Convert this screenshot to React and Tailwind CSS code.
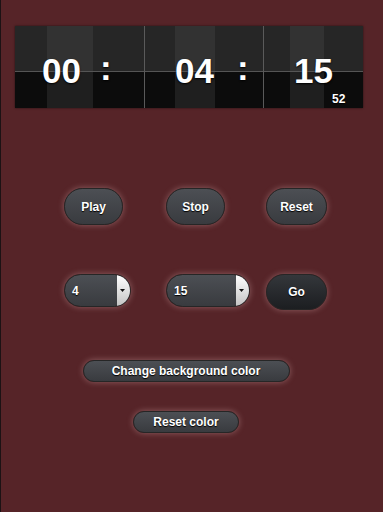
import React from "react";

const font = { fontFamily: '"Liberation Sans", Arial, sans-serif' };

// one block of the clock face: three stripes, top half lighter than bottom
const ClockBlock = ({ stripes, children, last }) => (
  <div
    className={`relative flex flex-col ${last ? "" : "border-r border-[#5a5a5a]"}`}
  >
    <div className="flex h-[45px]">
      {stripes.map((w, i) => (
        <div
          key={`t_${i}`}
          style={{ width: w }}
          className={i === 1 ? "bg-[#323232]" : "bg-[#262626]"}
        />
      ))}
    </div>
    <div className="h-px bg-[#555555]" />
    <div className="flex h-[36px]">
      {stripes.map((w, i) => (
        <div
          key={`b_${i}`}
          style={{ width: w }}
          className={i === 1 ? "bg-[#1f1f1f]" : "bg-[#0c0c0c]"}
        />
      ))}
    </div>
    {children}
  </div>
);

const digitCls =
  "absolute text-[35px] font-bold leading-none text-white [text-shadow:0_1px_2px_#000]";

const PillButton = ({ label, className = "", dark }) => (
  <button
    className={`flex items-center justify-center rounded-full border border-[#262626] text-[12px] font-bold text-white [text-shadow:0_1px_1px_#000] shadow-[0_0_6px_rgba(255,210,210,0.35)] ${
      dark
        ? "bg-linear-to-b from-[#34373b] to-[#1c1e21]"
        : "bg-linear-to-b from-[#4c4f54] to-[#393b3f]"
    } ${className}`}
  >
    {label}
  </button>
);

const SelectBox = ({ value, width }) => (
  <div
    style={{ width }}
    className="flex h-[33px] items-stretch overflow-hidden rounded-full border border-[#262626] bg-linear-to-b from-[#4c4f54] to-[#393b3f] shadow-[0_0_6px_rgba(255,210,210,0.35)]"
  >
    <span className="flex flex-1 items-center pl-[7px] text-[12px] font-bold text-white [text-shadow:0_1px_1px_#000]">
      {value}
    </span>
    <span className="flex w-[13px] items-center justify-center rounded-r-full bg-linear-to-b from-white to-[#c4c4c4]">
      <svg width="5" height="3" viewBox="0 0 5 3" className="-ml-[2px]">
        <path d="M0 0h5L2.5 3z" fill="#111" />
      </svg>
    </span>
  </div>
);

export default function App() {
  return (
    <div
      style={font}
      className="min-h-screen border-l border-[#1c1214] bg-[#562428]"
    >
      <div className="pl-[14px] pt-[26px]">
        <div className="flex w-[348px] shadow-[0_0_2px_rgba(0,0,0,0.6)]">
          <ClockBlock stripes={[32, 46, 51]}>
            <span className={`${digitCls} left-[27px] top-[27px]`}>00</span>
            <span className={`${digitCls} left-[85px] top-[24px]`}>:</span>
          </ClockBlock>
          <ClockBlock stripes={[30, 40, 48]}>
            <span className={`${digitCls} left-[30px] top-[27px]`}>04</span>
            <span className={`${digitCls} left-[92px] top-[24px]`}>:</span>
          </ClockBlock>
          <ClockBlock stripes={[26, 34, 39]} last>
            <span className={`${digitCls} left-[30px] top-[27px]`}>15</span>
            <span className="absolute left-[68px] top-[67px] text-[12px] font-bold leading-none text-white [text-shadow:0_1px_1px_#000]">
              52
            </span>
          </ClockBlock>
        </div>
      </div>

      <div className="mt-[80px] grid grid-cols-[102px_100px_1fr] pl-[63px]">
        <PillButton label="Play" className="h-[37px] w-[59px]" />
        <PillButton label="Stop" className="h-[37px] w-[59px]" />
        <PillButton label="Reset" className="h-[37px] w-[61px]" />
      </div>

      <div className="mt-[49px] grid grid-cols-[102px_100px_1fr] items-start pl-[63px]">
        <SelectBox value="4" width={67} />
        <SelectBox value="15" width={84} />
        <PillButton label="Go" dark className="h-[36px] w-[61px]" />
      </div>

      <div className="mt-[50px] flex flex-col items-center gap-[29px] pr-[12px]">
        <PillButton label="Change background color" className="h-[22px] w-[207px]" />
        <PillButton label="Reset color" className="h-[22px] w-[106px]" />
      </div>
    </div>
  );
}
